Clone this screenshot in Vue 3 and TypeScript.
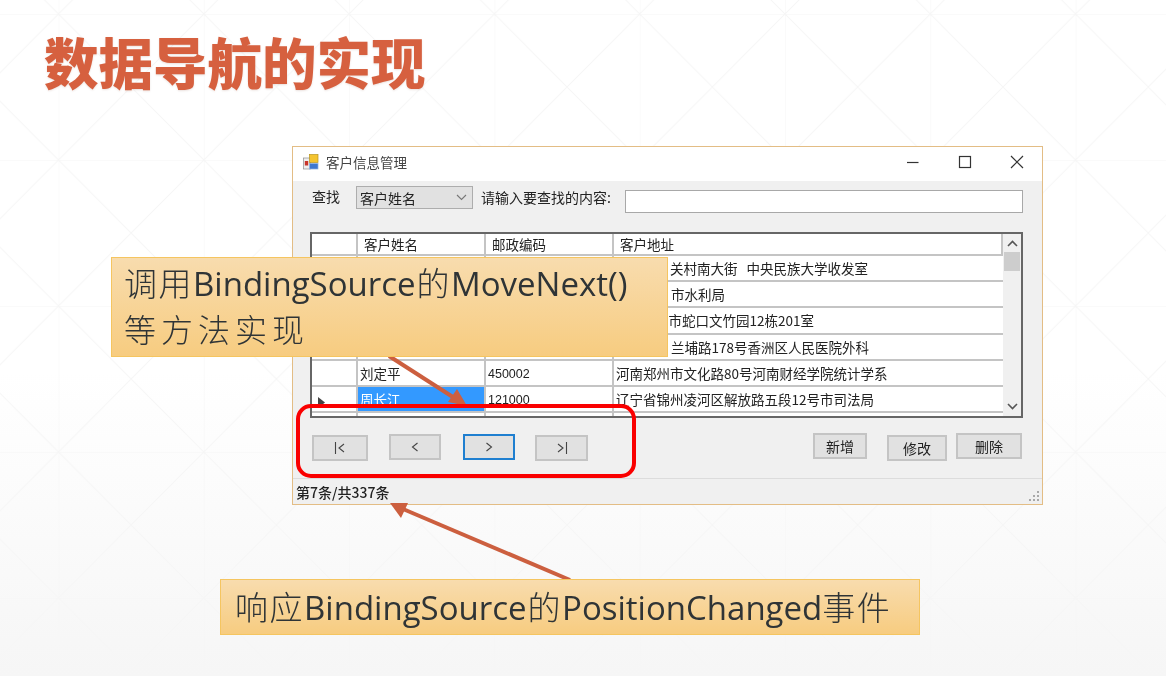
<script setup lang="ts">
interface Row {
  name: string
  zip: string
  address: string
  indent: number
  selected?: boolean
}

const rows: Row[] = [
  { name: '', zip: '', address: '关村南大街   中央民族大学收发室', indent: 54 },
  { name: '', zip: '', address: '市水利局', indent: 55 },
  { name: '', zip: '', address: '圳市蛇口文竹园12栋201室', indent: 39 },
  { name: '', zip: '', address: '兰埔路178号香洲区人民医院外科', indent: 55 },
  { name: '刘定平', zip: '450002', address: '河南郑州市文化路80号河南财经学院统计学系', indent: 0 },
  { name: '周长江', zip: '121000', address: '辽宁省锦州凌河区解放路五段12号市司法局', indent: 0, selected: true },
  { name: '', zip: '', address: '', indent: 0 },
]
</script>

<template>
  <div class="slide">
    <svg class="pattern" width="1166" height="676" aria-hidden="true">
      <defs>
        <pattern id="tile" x="58.5" y="14" width="145.3" height="146" patternUnits="userSpaceOnUse">
          <path d="M0 0H145.3M0 0V146M0 0L145.3 146M145.3 0L0 146" fill="none" stroke="#f6f6f6" stroke-width="1" />
        </pattern>
      </defs>
      <rect width="1166" height="676" fill="url(#tile)" />
    </svg>

    <h1 class="title">数据导航的实现</h1>

    <section class="window">
      <header class="titlebar">
        <svg class="app-icon" width="16" height="16" viewBox="0 0 16 16">
          <rect x="0.5" y="4" width="7" height="11" fill="#eeeeee" stroke="#8f8f8f" stroke-width="0.7" />
          <rect x="1.8" y="7" width="3.4" height="4.5" fill="#c8352b" />
          <rect x="6.5" y="0.5" width="8.5" height="8" fill="#f4c430" stroke="#b8941f" stroke-width="0.7" />
          <rect x="6.5" y="9.5" width="8.5" height="5.5" fill="#3f78d0" stroke="#8fb0e0" stroke-width="0.7" />
        </svg>
        <span class="win-title">客户信息管理</span>
        <div class="controls">
          <svg width="14" height="14" viewBox="0 0 14 14"><path d="M1 7.5H12.5" stroke="#333" stroke-width="1.2" /></svg>
          <svg width="14" height="14" viewBox="0 0 14 14"><rect x="1.5" y="1.5" width="11" height="11" fill="none" stroke="#333" stroke-width="1.2" /></svg>
          <svg width="14" height="14" viewBox="0 0 14 14"><path d="M1 1L13 13M13 1L1 13" stroke="#333" stroke-width="1.2" /></svg>
        </div>
      </header>

      <div class="body">
        <div class="toolbar">
          <span class="find">查找</span>
          <div class="combo">
            <span>客户姓名</span>
            <svg width="11" height="7" viewBox="0 0 11 7"><path d="M1 1L5.5 5.5L10 1" fill="none" stroke="#777" stroke-width="1.1" /></svg>
          </div>
          <span class="prompt">请输入要查找的内容:</span>
          <div class="search"></div>
        </div>

        <div class="grid">
          <div class="table">
            <div class="tr head">
              <div class="td"></div>
              <div class="td">客户姓名</div>
              <div class="td">邮政编码</div>
              <div class="td">客户地址</div>
            </div>
            <div v-for="(row, i) in rows" :key="i" class="tr">
              <div class="td marker">
                <svg v-if="row.selected" width="7" height="11" viewBox="0 0 7 11"><path d="M0 0L7 5.5L0 11Z" fill="#444" /></svg>
              </div>
              <div class="td name" :class="{ selected: row.selected }">{{ row.name }}</div>
              <div class="td zip">{{ row.zip }}</div>
              <div class="td addr" :style="{ paddingLeft: 2 + row.indent + 'px' }">{{ row.address }}</div>
            </div>
          </div>
          <div class="scroll">
            <svg width="11" height="7" viewBox="0 0 11 7"><path d="M1 6L5.5 1.5L10 6" fill="none" stroke="#555" stroke-width="1.6" /></svg>
            <div class="thumb"></div>
            <svg class="down" width="11" height="7" viewBox="0 0 11 7"><path d="M1 1L5.5 5.5L10 1" fill="none" stroke="#555" stroke-width="1.6" /></svg>
          </div>
        </div>

        <div class="actions">
          <button class="btn first">
            <svg width="12" height="12" viewBox="0 0 12 12"><path d="M1.5 0V12M10 2L5 6L10 10" fill="none" stroke="#444" stroke-width="1.1" /></svg>
          </button>
          <button class="btn prev">
            <svg width="8" height="12" viewBox="0 0 8 12"><path d="M6.5 2L1.5 6L6.5 10" fill="none" stroke="#444" stroke-width="1.1" /></svg>
          </button>
          <button class="btn next">
            <svg width="8" height="12" viewBox="0 0 8 12"><path d="M1.5 2L6.5 6L1.5 10" fill="none" stroke="#444" stroke-width="1.1" /></svg>
          </button>
          <button class="btn last">
            <svg width="12" height="12" viewBox="0 0 12 12"><path d="M10.5 0V12M2 2L7 6L2 10" fill="none" stroke="#444" stroke-width="1.1" /></svg>
          </button>
          <button class="btn add">新增</button>
          <button class="btn edit">修改</button>
          <button class="btn del">删除</button>
        </div>
      </div>

      <footer class="status">
        <span>第7条/共337条</span>
        <svg class="grip" width="12" height="12" viewBox="0 0 12 12" fill="#a8a8a8">
          <rect x="9" y="1" width="2" height="2" /><rect x="5" y="5" width="2" height="2" /><rect x="9" y="5" width="2" height="2" />
          <rect x="1" y="9" width="2" height="2" /><rect x="5" y="9" width="2" height="2" /><rect x="9" y="9" width="2" height="2" />
        </svg>
      </footer>
    </section>

    <svg class="arrows" width="1166" height="676" aria-hidden="true">
      <path d="M389 356L456 399" stroke="#cc5f3f" stroke-width="4" />
      <path d="M467 406L448 402L457 389Z" fill="#cc5f3f" />
      <path d="M570 580L403 509" stroke="#cc5f3f" stroke-width="4" />
      <path d="M390 503L408 503L401 518Z" fill="#cc5f3f" />
    </svg>

    <div class="highlight"></div>

    <div class="callout one">
      <p><span class="cjk">调用</span>BindingSource<span class="cjk gap">的</span>MoveNext()</p>
      <p class="wide">等方法实现</p>
    </div>
    <div class="callout two">
      <p><span class="cjk">响应</span>BindingSource<span class="cjk gap">的</span>PositionChanged<span class="cjk">事件</span></p>
    </div>
  </div>
</template>

<style>
html,
body {
  margin: 0;
  background: #fff;
}
</style>

<style scoped>
.slide {
  position: relative;
  width: 1166px;
  height: 676px;
  overflow: hidden;
  background: linear-gradient(180deg, #ffffff 0%, #ffffff 55%, #f6f6f6 100%);
  font-family: "Noto Sans CJK SC", "Liberation Sans", sans-serif;
  filter: blur(0.45px);
}
.pattern {
  position: absolute;
  inset: 0;
}
.title {
  position: relative;
  margin: 0;
  padding: 22px 0 0 44px;
  font-size: 54.5px;
  line-height: 78px;
  font-weight: 900;
  color: #d6603f;
  text-shadow: 0 1px 2px rgba(120, 60, 40, 0.15);
}

.window {
  position: absolute;
  left: 292px;
  top: 146px;
  width: 751px;
  height: 359px;
  box-sizing: border-box;
  border: 1px solid #e3bd85;
  background: #f0f0f0;
  display: flex;
  flex-direction: column;
  color: #222;
  font-size: 13.5px;
}
.titlebar {
  height: 34px;
  flex: none;
  box-sizing: border-box;
  background: #fff;
  display: flex;
  align-items: center;
  padding: 0 18px 4px 10px;
}
.app-icon {
  margin-right: 7px;
}
.win-title {
  color: #444;
  font-size: 13.5px;
}
.controls {
  margin-left: auto;
  display: flex;
  gap: 38px;
}
.body {
  flex: 1;
  min-height: 0;
  padding: 0 19px 0 17px;
  display: flex;
  flex-direction: column;
}
.toolbar {
  height: 51px;
  flex: none;
  display: flex;
  align-items: flex-start;
}
.find {
  flex: none;
  width: 28px;
  margin: 4px 16px 0 2px;
  line-height: 22px;
  font-size: 14px;
  white-space: nowrap;
}
.combo {
  margin-top: 5px;
  width: 117px;
  height: 23px;
  box-sizing: border-box;
  border: 1px solid #adadad;
  background: #e1e1e1;
  display: flex;
  align-items: center;
  justify-content: space-between;
  padding: 0 5px 0 3px;
  font-size: 14px;
}
.prompt {
  margin: 6px 13px 0 8px;
  line-height: 20px;
  width: 131px;
  white-space: nowrap;
  font-size: 14px;
}
.search {
  margin-top: 9px;
  width: 398px;
  height: 23px;
  box-sizing: border-box;
  border: 1px solid #a8a8a8;
  background: #fff;
}

.grid {
  height: 186px;
  flex: none;
  box-sizing: border-box;
  border: 2px solid #666;
  background: #fff;
  display: flex;
  overflow: hidden;
}
.table {
  width: 691px;
  flex: none;
  overflow: hidden;
}
.tr {
  display: grid;
  grid-template-columns: 46px 128px 128px 1fr;
  height: 26.2px;
  box-sizing: border-box;
  border-bottom: 2px solid #c4c4c4;
}
.tr.head {
  height: 22px;
}
.td {
  border-right: 2px solid #c4c4c4;
  line-height: 24px;
  padding-left: 2px;
  white-space: nowrap;
  overflow: hidden;
}
.head .td {
  line-height: 21px;
  padding-left: 6px;
}
.marker {
  display: flex;
  align-items: center;
  padding: 6px 0 0 6px;
  box-sizing: border-box;
}
.name.selected {
  background: #3399ff;
  color: #fff;
}
.zip {
  font-family: "Liberation Sans", sans-serif;
  font-size: 12.5px;
  line-height: 27px;
}
.addr {
  border-right: 0;
  white-space: pre;
}
.scroll {
  flex: 1;
  background: #f0f0f0;
  display: flex;
  flex-direction: column;
  align-items: center;
  padding-top: 6px;
}
.thumb {
  width: 16px;
  height: 19px;
  margin-top: 5px;
  background: #cdcdcd;
}
.down {
  margin-top: auto;
  margin-bottom: 6px;
}

.actions {
  flex: 1;
  min-height: 0;
  display: flex;
  align-items: flex-start;
}
.btn {
  height: 26px;
  padding: 0;
  box-sizing: border-box;
  border: 2px solid #c4c4c4;
  background: #e1e1e1;
  color: #222;
  font: inherit;
  font-size: 14px;
  display: flex;
  align-items: center;
  justify-content: center;
}
.first {
  width: 56px;
  margin: 17px 21px 0 2px;
}
.prev {
  width: 52px;
  margin: 16px 22px 0 0;
}
.next {
  width: 52px;
  margin: 16px 20px 0 0;
  border-color: #1f7fd0;
}
.last {
  width: 53px;
  margin: 17px 225px 0 0;
}
.add {
  width: 54px;
  margin: 15px 20px 0 0;
}
.edit {
  width: 60px;
  margin: 17px 9px 0 0;
}
.del {
  width: 66px;
  margin: 15px 0 0 0;
}

.status {
  height: 26px;
  flex: none;
  box-sizing: border-box;
  border-top: 1px solid #dcdcdc;
  display: flex;
  align-items: center;
  padding: 0 2px 0 3px;
  font-size: 14px;
  font-weight: 500;
}
.grip {
  margin-left: auto;
  margin-top: 8px;
}

.arrows {
  position: absolute;
  inset: 0;
  pointer-events: none;
}
.highlight {
  position: absolute;
  left: 296px;
  top: 404px;
  width: 340px;
  height: 74px;
  box-sizing: border-box;
  border: 4px solid #fa0000;
  border-radius: 15px;
}

.callout {
  position: absolute;
  box-sizing: border-box;
  border: 1px solid #f5c560;
  background: linear-gradient(180deg, #f8dcae 0%, #f7cc80 100%);
  color: #2f3436;
  font-family: "Open Sans", "Noto Sans CJK SC", sans-serif;
  white-space: nowrap;
}
.callout p {
  margin: 0;
}
.cjk {
  font-family: "Noto Sans CJK SC", sans-serif;
  font-weight: 300;
  font-size: 33px;
  letter-spacing: 1.5px;
}
.gap {
  margin-left: 1px;
}
.one {
  left: 111px;
  top: 257px;
  width: 557px;
  height: 100px;
  padding: 2px 0 0 12px;
  font-size: 33px;
  line-height: 45px;
}
.wide {
  font-family: "Noto Sans CJK SC", sans-serif;
  font-weight: 300;
  font-size: 32px;
  letter-spacing: 5px;
}
.two {
  left: 220px;
  top: 579px;
  width: 700px;
  height: 56px;
  padding: 4px 0 0 14px;
  font-size: 33px;
  line-height: 45px;
}
</style>
